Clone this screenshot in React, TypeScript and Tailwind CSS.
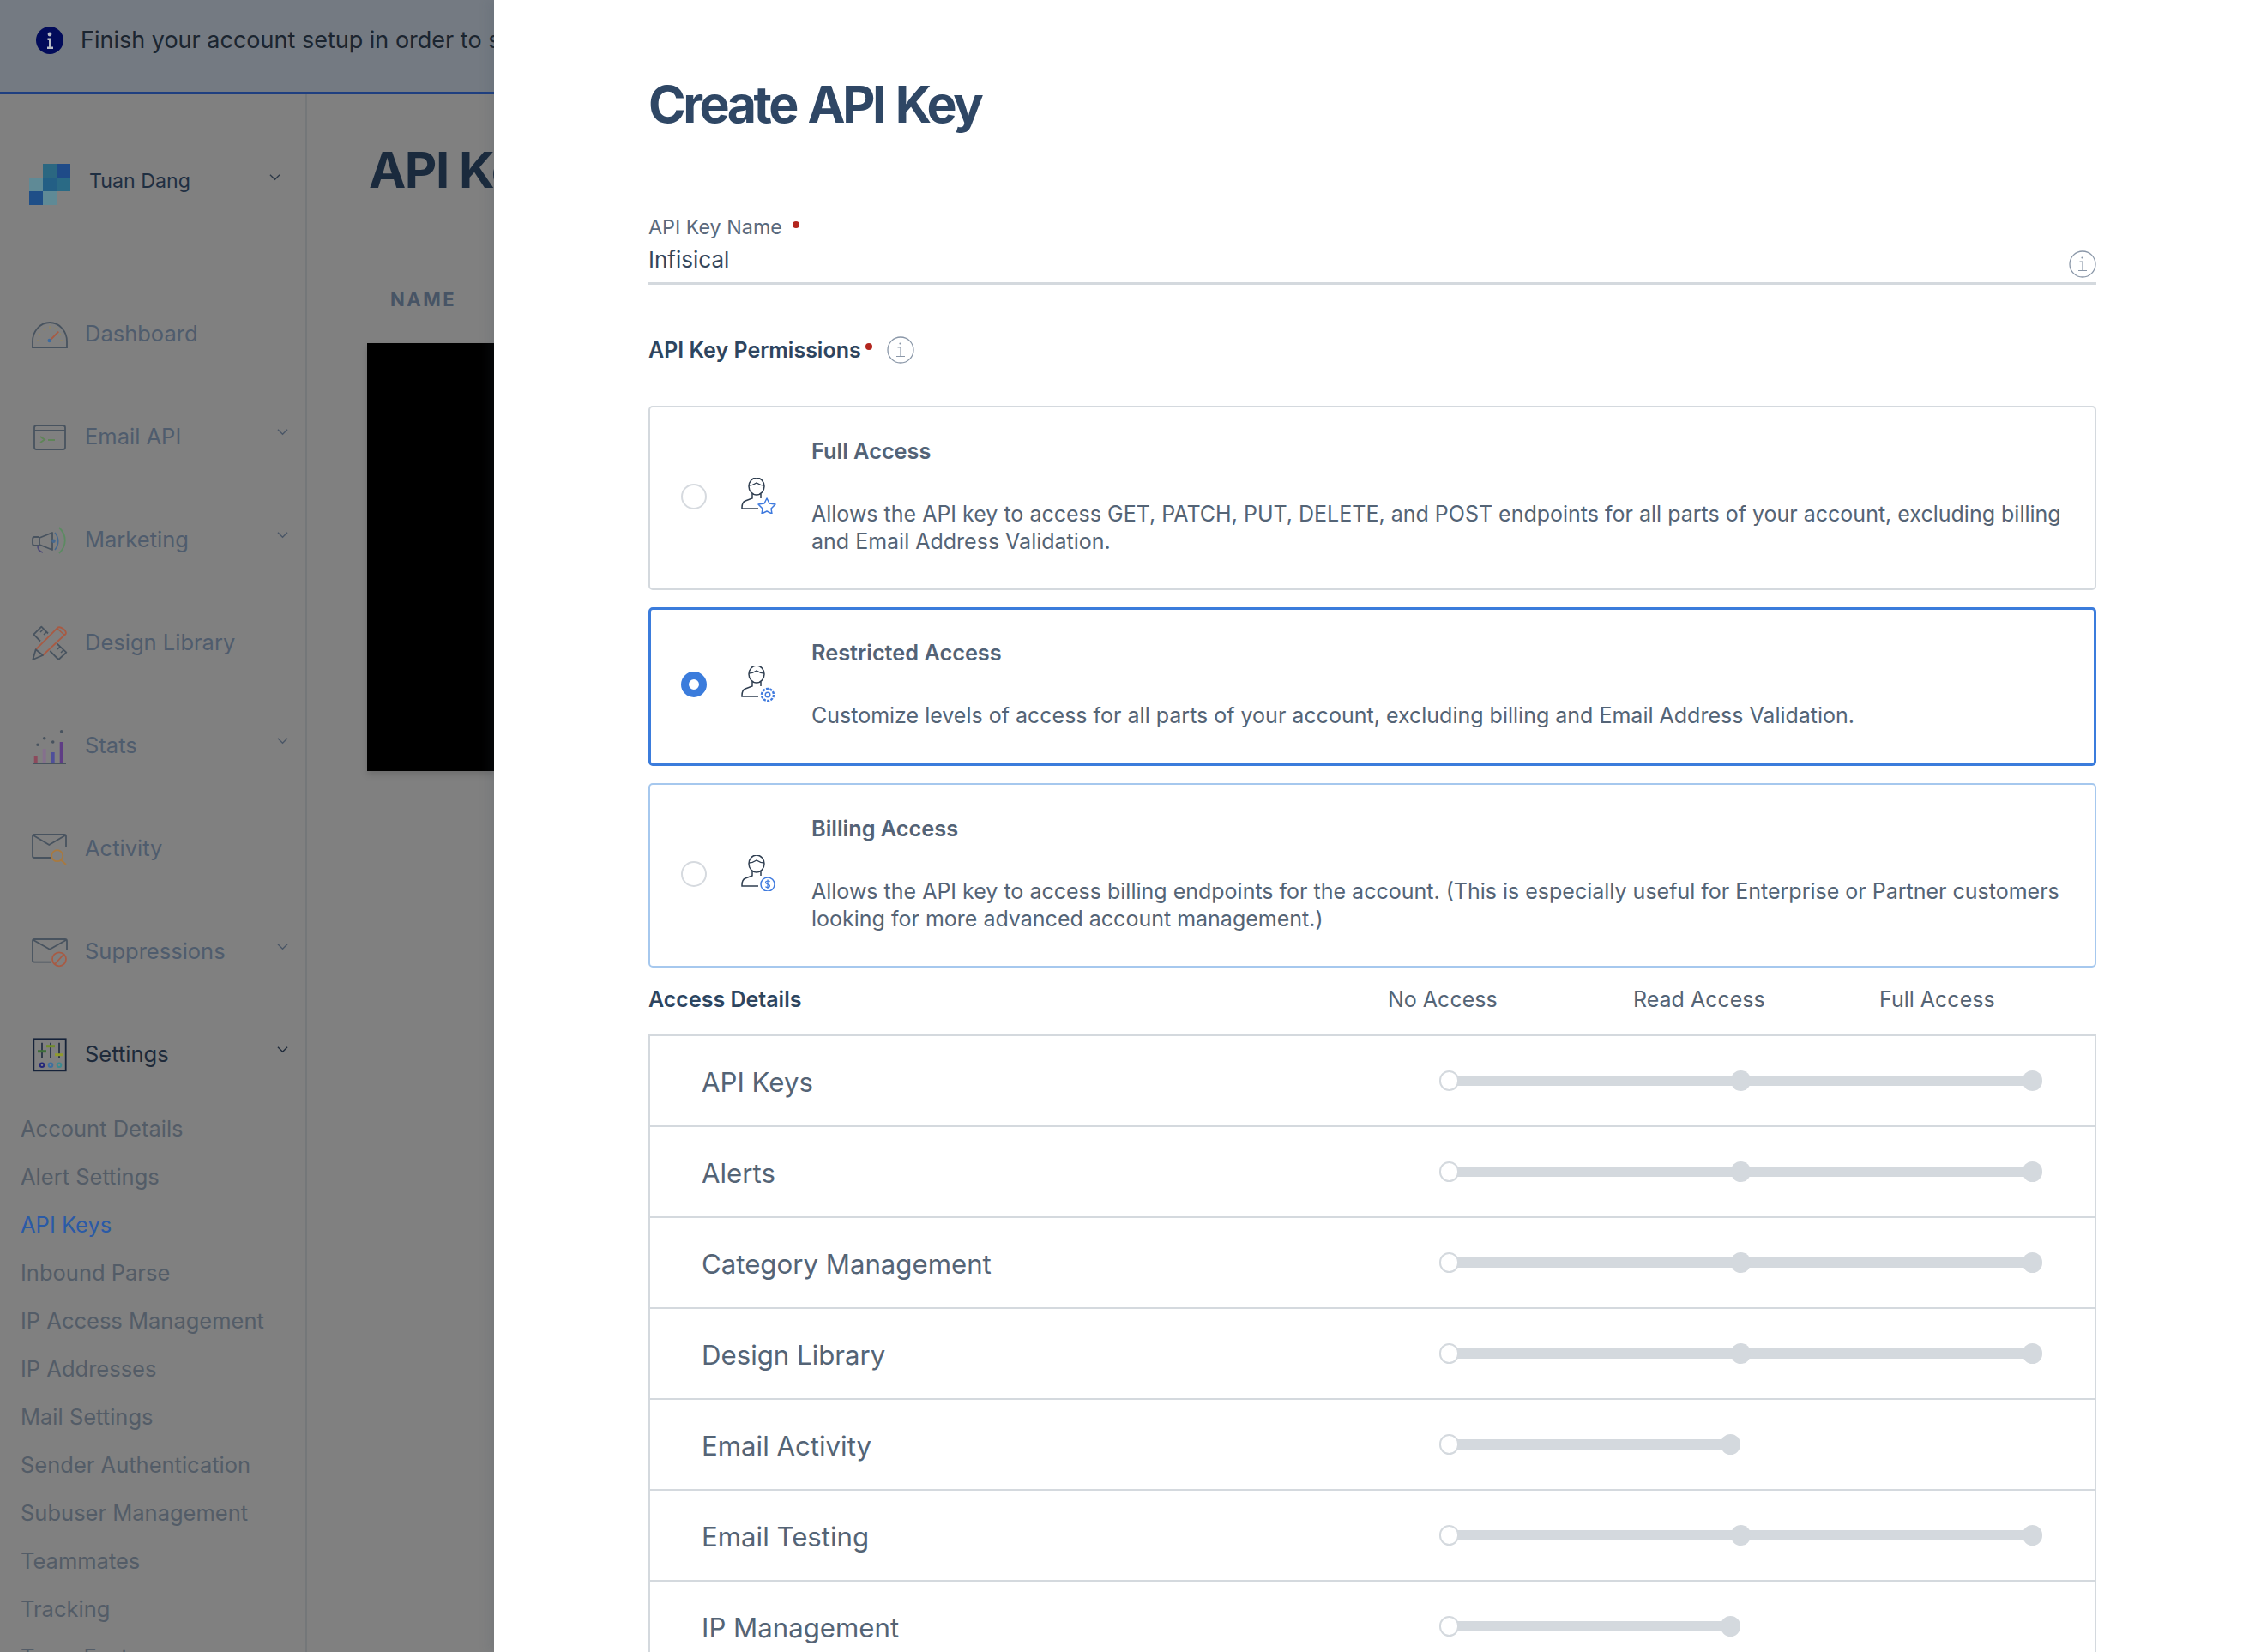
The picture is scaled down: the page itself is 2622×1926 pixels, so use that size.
import type { ReactNode } from 'react';

const font = "font-['Inter','Liberation_Sans',sans-serif]";

function Chevron({ className }: { className: string }) {
  return (
    <svg viewBox="0 0 14 9" className={className} fill="none" stroke="currentColor" strokeWidth="1.4">
      <path d="M1 1.5 7 7.5 13 1.5" />
    </svg>
  );
}

function InfoCircle() {
  return (
    <svg viewBox="0 0 32 32" className="w-8 h-8" fill="none">
      <circle cx="16" cy="16" r="15" stroke="#8a97a8" strokeWidth="1.3" />
      <circle cx="15.5" cy="8.5" r="1.1" fill="#8a97a8" />
      <path d="M12.5 13h3.5v10M11 23.5h10" stroke="#8a97a8" strokeWidth="1.2" />
    </svg>
  );
}

const gray = '#48535f';

const icons: Record<string, ReactNode> = {
  Dashboard: (
    <>
      <path d="M1 38h40v-7C41 19 32 9 21 9S1 19 1 31z" stroke={gray} strokeWidth="1.8" />
      <path d="M21 30 31.300 19.700" stroke="#a85a43" strokeWidth="1.8" />
      <circle cx="20.700" cy="30" r="2.200" fill="#3f6b9e" />
      <path d="M6 30h3M8 22l2 1M13.500 16l1.500 2M21 13v3M28 15l-1 2M34 22l-2 1M36 30h-3" stroke="#8f8464" strokeWidth="1.500" />
    </>
  ),
  'Email API': (
    <>
      <rect x="3" y="9" width="36" height="28" rx="2.500" stroke={gray} strokeWidth="1.800" />
      <path d="M3 15h36" stroke={gray} strokeWidth="1.800" />
      <path d="M10 22l5 3.500-5 3.500M19 26h8" stroke="#5f8558" strokeWidth="1.800" />
    </>
  ),
  Marketing: (
    <>
      <path d="M9 20 24 14V34L9 28z" stroke={gray} strokeWidth="1.800" strokeLinejoin="round" />
      <path d="M9 19H3C1.500 19 1 20 1 22v4c0 2 .5 3 2 3h6" stroke={gray} strokeWidth="1.800" />
      <path d="M7 29c0 4 2 7 6 8" stroke="#4f4c78" strokeWidth="1.800" />
      <circle cx="25.500" cy="23.700" r="2.300" fill="#45688f" />
      <path d="M27 14c5 6 5 14 0 20" stroke="#45688f" strokeWidth="1.600" />
      <path d="M32 8c9 9 9 21 0 30" stroke="#5c8a62" strokeWidth="1.800" />
    </>
  ),
  'Design Library': (
    <>
      <path d="M19 11.500 11.300 3.700l-9 9L10 20.500M29.700 23.700 40.300 33.700l-9 8.300-10-10" stroke={gray} strokeWidth="1.800" strokeLinejoin="round" />
      <path d="M13 7l-3 3M17 10l-3 3M33 27l-3 3M37 31l-3 3" stroke={gray} strokeWidth="1.500" />
      <path d="M4.700 30.300 29.700 5.300C33 2 41 8 39.700 12L13 37" stroke="#a85a43" strokeWidth="1.800" />
      <path d="M30 6l9 8" stroke="#a85a43" strokeWidth="1.500" />
      <path d="M4.700 30.300 1.300 42 13 37z" stroke={gray} strokeWidth="1.800" strokeLinejoin="round" />
    </>
  ),
  Stats: (
    <>
      <path d="M1 43h39" stroke={gray} strokeWidth="2" />
      <path d="M4.700 42v-8" stroke="#8c4a5c" strokeWidth="4" />
      <path d="M14.700 42V26" stroke="#85708d" strokeWidth="4" />
      <path d="M24.700 42V30" stroke="#4f4f9a" strokeWidth="4" />
      <path d="M34.700 42V18" stroke="#5f3d85" strokeWidth="4" />
      <circle cx="7" cy="21.300" r="1.800" fill={gray} />
      <circle cx="14.700" cy="13.700" r="1.800" fill={gray} />
      <circle cx="24.700" cy="18" r="1.800" fill={gray} />
      <circle cx="34.700" cy="5.700" r="1.800" fill={gray} />
    </>
  ),
  Activity: (
    <>
      <path d="M22 33H3q-2 0-2-2V8q0-2 2-2h35q2 0 2 2v13" stroke={gray} strokeWidth="1.800" />
      <path d="M2 7l18.300 11L39 7" stroke={gray} strokeWidth="1.800" />
      <circle cx="29.700" cy="30.700" r="6.500" stroke="#a8793f" strokeWidth="1.800" />
      <path d="M34 35.500 40 41" stroke="#a8793f" strokeWidth="1.800" />
    </>
  ),
  Suppressions: (
    <>
      <path d="M22 34.700H3q-2 0-2-2V10q0-2 2-2h36q2 0 2 2v10" stroke={gray} strokeWidth="1.800" />
      <path d="M2 9l19 10.700L40 9" stroke={gray} strokeWidth="1.800" />
      <circle cx="32" cy="31.300" r="8" stroke="#a85a43" strokeWidth="1.800" />
      <path d="M27 37 37 26" stroke="#a85a43" strokeWidth="1.800" />
    </>
  ),
  Settings: (
    <>
      <rect x="2.300" y="4.300" width="37.400" height="37" stroke="#16233a" strokeWidth="1.800" />
      <path d="M12 8.700V27M22 8.700V27M32 8.700V27" stroke="#16233a" strokeWidth="1.500" />
      <path d="M7 18.700h10" stroke="#3e6e3a" strokeWidth="3" />
      <path d="M17 12.700h10" stroke="#6f8c2a" strokeWidth="3" />
      <path d="M27 22.700h10" stroke="#8f9a2c" strokeWidth="3" />
      <circle cx="12" cy="34.700" r="2.300" stroke="#23257a" strokeWidth="2" />
      <circle cx="22" cy="34.700" r="2.300" stroke="#3d6fa0" strokeWidth="2" />
      <circle cx="32" cy="34.700" r="2.300" stroke="#3a8a90" strokeWidth="2" />
    </>
  ),
};

const navItems = [
  { label: 'Dashboard', chevron: false },
  { label: 'Email API', chevron: true },
  { label: 'Marketing', chevron: true },
  { label: 'Design Library', chevron: false },
  { label: 'Stats', chevron: true },
  { label: 'Activity', chevron: false },
  { label: 'Suppressions', chevron: true },
  { label: 'Settings', chevron: true },
];

const settingsItems = [
  'Account Details',
  'Alert Settings',
  'API Keys',
  'Inbound Parse',
  'IP Access Management',
  'IP Addresses',
  'Mail Settings',
  'Sender Authentication',
  'Subuser Management',
  'Teammates',
  'Tracking',
  'Team Features',
];

function Sidebar() {
  return (
    <aside className="w-[358px] shrink-0 border-r-2 border-[#747779] pt-[81px]">
      <div className="flex items-center h-12 pl-[34px]">
        <div className="grid grid-cols-3 grid-rows-3 w-12 h-12 shrink-0">
          <div />
          <div className="bg-[#2b6781]" />
          <div className="bg-[#1f4b88]" />
          <div className="bg-[#5f8a96]" />
          <div className="bg-[#235f85]" />
          <div className="bg-[#2a6a85]" />
          <div className="bg-[#1f4f88]" />
          <div className="bg-[#5f8a96]" />
          <div />
        </div>
        <span className="ml-[22px] mb-[6px] text-[23.200px] leading-none text-[#1f2f42]">Tuan Dang</span>
        <Chevron className="w-[13px] h-[9px] ml-[92px] mb-[17px] text-[#2b3847]" />
      </div>
      <nav className="mt-[89px]">
        {navItems.map((item) => (
          <div key={item.label} className="flex items-center h-[120px] pl-[37px]">
            <svg viewBox="0 0 42 42" className="w-[42px] h-[42px] shrink-0 overflow-visible" fill="none">
              {icons[item.label]}
            </svg>
            <span
              className={`ml-5 mt-[2px] flex-1 text-[25.500px] leading-none ${
                item.label === 'Settings' ? 'text-[#1e2a3a]' : 'text-[#4f5c6d]'
              }`}
            >
              {item.label}
            </span>
            {item.chevron && (
              <Chevron
                className={`w-[13px] h-[9px] mr-5 mb-[10px] ${
                  item.label === 'Settings' ? 'text-[#1e2a3a]' : 'text-[#4a5666]'
                }`}
              />
            )}
          </div>
        ))}
      </nav>
      <div>
        {settingsItems.map((label) => (
          <div
            key={label}
            className={`flex items-center h-14 pl-6 text-[25.500px] leading-none ${
              label === 'API Keys' ? 'text-[#2a5aa6]' : 'text-[#535c67]'
            }`}
          >
            {label}
          </div>
        ))}
      </div>
    </aside>
  );
}

function PersonIcon({ badge }: { badge: ReactNode }) {
  return (
    <svg viewBox="0 0 42 42" className="w-[42px] h-[42px] shrink-0" fill="none">
      <ellipse cx="19" cy="10" rx="9" ry="10" stroke="#2f3e50" strokeWidth="1.5" />
      <path d="M10 9c3 0 6-1 9-3 3 2 6 3 9 3" stroke="#2f3e50" strokeWidth="1.5" />
      <path d="M14 19v5l-8 3c-3 1-4 3-4 8v1h19M24 19v5" stroke="#2f3e50" strokeWidth="1.5" />
      {badge}
    </svg>
  );
}

const starBadge = (
  <path
    d="M31 24l3 6 7 1-5 5 1 6-6-3-6 3 1-6-5-5 7-1z"
    stroke="#3f7ade"
    strokeWidth="1.5"
    strokeLinejoin="round"
  />
);

const gearBadge = (
  <>
    <circle cx="32" cy="34" r="7" stroke="#3f7ade" strokeWidth="2.500" strokeDasharray="3 1.400" />
    <circle cx="32" cy="34" r="2.800" stroke="#3f7ade" strokeWidth="1.400" />
  </>
);

const dollarBadge = (
  <>
    <circle cx="32" cy="34" r="8" stroke="#3f7ade" strokeWidth="1.500" fill="#ffffff" />
    <path
      d="M34.500 31c-1-1.500-5-1.500-5 .8 0 2.600 5 1.400 5 4 0 2.200-4 2.200-5 .8M32 28.500v11"
      stroke="#3f7ade"
      strokeWidth="1.200"
    />
  </>
);

type AccessCard = {
  title: string;
  body: ReactNode;
  badge: ReactNode;
  box: string;
  selected?: boolean;
};

const accessCards: AccessCard[] = [
  {
    title: 'Full Access',
    body: (
      <>
        Allows the API key to access GET, PATCH, PUT, DELETE, and POST endpoints for all parts of your account, excluding billing
        <br />
        and Email Address Validation.
      </>
    ),
    badge: starBadge,
    box: 'h-[215px] border-2 border-[#d4d9de] pt-[38px]',
  },
  {
    title: 'Restricted Access',
    body: 'Customize levels of access for all parts of your account, excluding billing and Email Address Validation.',
    badge: gearBadge,
    box: 'h-[185px] mt-5 border-[3px] border-[#3b7cdc] pt-[37px]',
    selected: true,
  },
  {
    title: 'Billing Access',
    body: (
      <>
        Allows the API key to access billing endpoints for the account. (This is especially useful for Enterprise or Partner customers
        <br />
        looking for more advanced account management.)
      </>
    ),
    badge: dollarBadge,
    box: 'h-[215px] mt-5 border-2 border-[#a6c8ee] pt-[38px]',
  },
];

function AccessOption({ card }: { card: AccessCard }) {
  return (
    <div className={`flex rounded-[5px] ${card.box}`}>
      <div className={`flex items-center self-stretch -mt-[42px] ${card.selected ? 'pl-[35px]' : 'pl-[36px]'}`}>
        {card.selected ? (
          <div className="w-[30px] h-[30px] rounded-full border-[9px] border-[#3b7cdc] bg-white shrink-0" />
        ) : (
          <div className="w-[30px] h-[30px] rounded-full border-2 border-[#d6dadf] shrink-0" />
        )}
        <div className="ml-[39px] mb-[2px]">
          <PersonIcon badge={card.badge} />
        </div>
      </div>
      <div className="ml-[41px] flex-1">
        <h3 className="text-[25.300px] leading-[26px] font-semibold text-[#536377]">{card.title}</h3>
        <p className="mt-[44px] text-[25px] leading-[32px] text-[#546476]">{card.body}</p>
      </div>
    </div>
  );
}

type Permission = { label: string; levels: 2 | 3 };

const permissions: Permission[] = [
  { label: 'API Keys', levels: 3 },
  { label: 'Alerts', levels: 3 },
  { label: 'Category Management', levels: 3 },
  { label: 'Design Library', levels: 3 },
  { label: 'Email Activity', levels: 2 },
  { label: 'Email Testing', levels: 3 },
  { label: 'IP Management', levels: 2 },
];

function AccessSlider({ levels }: { levels: 2 | 3 }) {
  return (
    <div className={`relative flex items-center justify-between h-6 ${levels === 3 ? 'w-[703px]' : 'w-[351px]'}`}>
      <div className="absolute left-[12px] right-[12px] top-[6px] h-3 bg-[#d4d9de]" />
      <div className="relative w-[23px] h-6 rounded-full border-2 border-[#d4d9de] bg-white" />
      {levels === 3 && <div className="relative w-[23px] h-6 rounded-full bg-[#d4d9de]" />}
      <div className="relative w-[23px] h-6 rounded-full bg-[#d4d9de]" />
    </div>
  );
}

export default function App() {
  return (
    <div className={`flex w-[2622px] h-[1926px] overflow-hidden bg-[#808080] ${font}`}>
      <div className="w-[576px] shrink-0 overflow-hidden">
        <div className="w-[1200px] flex items-center h-[110px] pb-[14px] pl-[42px] bg-[#747a82] border-b-[3px] border-[#1f3f80]">
          <svg viewBox="0 0 32 32" className="w-8 h-8 shrink-0">
            <circle cx="16" cy="16" r="16" fill="#020b5a" />
            <circle cx="16" cy="9" r="2.400" fill="#b8bcc4" />
            <path d="M13.500 13.500h4.500v10h2v2.500h-7v-2.500h2v-7.500h-1.500z" fill="#b8bcc4" />
          </svg>
          <span className="ml-5 text-[27px] leading-none whitespace-nowrap text-[#1b2530]">
            Finish your account setup in order to start sending
          </span>
        </div>
        <div className="flex w-[576px]">
          <Sidebar />
          <main className="flex-1 pl-[72px] pt-[57px] overflow-hidden">
            <h1 className="text-[58px] leading-[62px] font-bold tracking-[-1.5px] whitespace-nowrap text-[#1a2a3d]">API Keys</h1>
            <div className="mt-[109px] pl-[25px] text-[22px] leading-none font-bold tracking-[2.500px] text-[#475465]">NAME</div>
            <div className="-ml-[2px] mt-[40px] h-[499px] bg-black shadow-[0_4px_8px_rgba(0,0,0,0.15)]" />
          </main>
        </div>
      </div>
      <div className="flex-1 bg-white pl-[180px] pr-[178px] pt-[90px] shadow-[-6px_0_12px_rgba(60,70,90,0.12)]">
        <h1 className="text-[59px] leading-[64px] font-bold tracking-[-3.400px] [word-spacing:3px] text-[#2f4765]">Create API Key</h1>

        <div className="mt-[99px] flex items-center h-6 text-[23.300px] leading-none text-[#5a6a7e]">
          API Key Name
          <span className="ml-[12px] mb-[6px] w-[8px] h-[8px] rounded-full bg-[#b3261e]" />
        </div>
        <div className="relative flex items-center h-[55px] pb-[1px] border-b-[3px] border-[#d4d9de] text-[26px] leading-none text-[#34465c]">
          Infisical
          <div className="absolute right-0 top-[15px]">
            <InfoCircle />
          </div>
        </div>

        <div className="mt-[60px] flex items-center h-8 text-[25px] leading-none font-semibold text-[#2d4560]">
          API Key Permissions
          <span className="ml-[5px] mb-[8px] w-[8px] h-[8px] rounded-full bg-[#b3261e]" />
          <div className="ml-[17px]">
            <InfoCircle />
          </div>
        </div>

        <div className="mt-[49px]">
          {accessCards.map((card) => (
            <AccessOption key={card.title} card={card} />
          ))}
        </div>

        <div className="flex items-center h-[78px] pb-[3px] text-[25px] leading-none text-[#546476]">
          <span className="w-[862px] font-semibold text-[#2d4560]">Access Details</span>
          <span className="w-[286px]">No Access</span>
          <span className="w-[287px]">Read Access</span>
          <span>Full Access</span>
        </div>

        <div className="border-x-2 border-t-2 border-[#d4d9de]">
          {permissions.map((row) => (
            <div key={row.label} className="flex items-center justify-between h-[106px] pl-[60px] pr-[61px] border-b-2 border-[#d4d9de]">
              <span className="mt-[5px] text-[31.200px] leading-none text-[#546476]">{row.label}</span>
              <div className="w-[703px]">
                <AccessSlider levels={row.levels} />
              </div>
            </div>
          ))}
        </div>
      </div>
    </div>
  );
}
